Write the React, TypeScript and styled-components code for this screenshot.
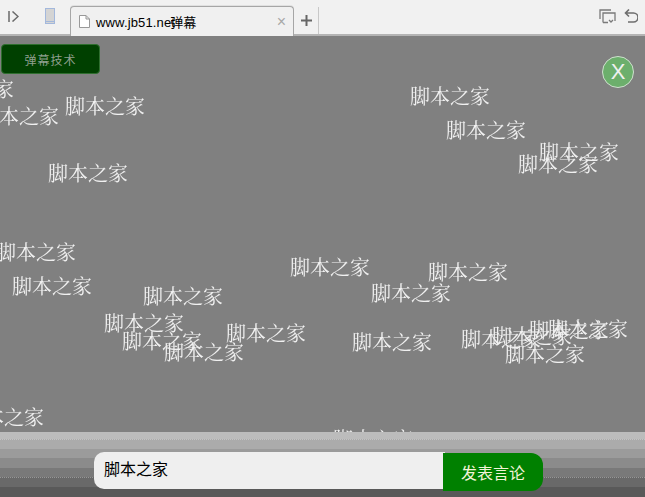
import React from 'react';
import styled, { createGlobalStyle } from 'styled-components';

const GlobalStyle = createGlobalStyle`
  html, body {
    margin: 0;
    padding: 0;
    overflow: hidden;
    background: #808080;
  }
`;

const Page = styled.div`
  width: 645px;
  height: 497px;
  display: flex;
  flex-direction: column;
  overflow: hidden;
  font-family: "Liberation Serif", "Noto Serif CJK SC", "Noto Sans CJK SC", serif;
`;

const BrowserBar = styled.div`
  height: 36px;
  flex: none;
  box-sizing: border-box;
  display: flex;
  align-items: flex-end;
  background: #f1f1f1;
  border-bottom: 2px solid #b4b4b4;
`;

const NavSlot = styled.div<{ $w: number; $left?: number }>`
  width: ${p => p.$w}px;
  height: 34px;
  flex: none;
  display: flex;
  align-items: center;
  justify-content: center;
  padding-bottom: 2px;
  padding-left: ${p => p.$left ?? 0}px;
  box-sizing: border-box;
`;

const Tab = styled.div`
  width: 224px;
  height: 30px;
  margin-bottom: -2px;
  flex: none;
  box-sizing: border-box;
  display: flex;
  align-items: center;
  padding: 0 7px 0 8px;
  background: #f0f0f0;
  border: 1px solid #a6a6a6;
  border-bottom: none;
  border-radius: 4px 4px 0 0;
  box-shadow: 0 -1px 0 #e0e0e0;
`;

const TabTitle = styled.span`
  margin-left: 6px;
  flex: 1;
  font-family: "Liberation Sans", "Noto Sans CJK SC", sans-serif;
  font-size: 13px;
  letter-spacing: 0.15px;
  color: #000;
  white-space: nowrap;
`;

const TitleOverlap = styled.span`
  margin-left: -5px;
`;

const TabClose = styled.span`
  font-family: "Liberation Sans", sans-serif;
  font-size: 16px;
  line-height: 1;
  color: #a8a8a8;
`;

const NewTab = styled.div`
  width: 24px;
  height: 27px;
  flex: none;
  display: flex;
  align-items: center;
  justify-content: center;
  border-right: 1px solid #c8c8c8;
`;

const Spacer = styled.div`
  flex: 1;
`;

const Stage = styled.div`
  flex: 1;
  position: relative;
  overflow: hidden;
  background: #808080;
`;

const TechButton = styled.button`
  position: absolute;
  left: 1px;
  top: 8px;
  width: 99px;
  height: 30px;
  padding: 0;
  background: #004000;
  border: 1px solid #2f6f2f;
  border-radius: 4px;
  color: #8f9f8f;
  font-family: "Noto Sans CJK SC", sans-serif;
  font-size: 12px;
  letter-spacing: 1px;
`;

const CloseBall = styled.div`
  position: absolute;
  right: 11px;
  top: 20px;
  width: 32px;
  height: 32px;
  box-sizing: border-box;
  border: 1px solid #cfe0cf;
  border-radius: 50%;
  background: #6caf6c;
  color: #f0f0f0;
  font-family: "Liberation Sans", sans-serif;
  font-size: 22px;
  line-height: 30px;
  text-align: center;
`;

const Danmaku = styled.span`
  position: absolute;
  font-size: 20px;
  line-height: 22px;
  color: #f0f0f0;
  white-space: nowrap;
  will-change: transform;
`;

const BottomBar = styled.div`
  height: 65px;
  flex: none;
  position: relative;
  display: flex;
  flex-direction: column;
`;

const Band = styled.div<{ $h: number; $c: string; $dotted?: boolean }>`
  height: ${p => p.$h}px;
  background: ${p => p.$c};
  border-top: ${p => (p.$dotted ? '1px dotted rgba(255,255,255,0.3)' : 'none')};
  box-sizing: border-box;
`;

const SendForm = styled.div`
  position: absolute;
  left: 94px;
  top: 20px;
  display: flex;
  align-items: flex-start;
`;

const SendInput = styled.div`
  width: 351px;
  height: 37px;
  box-sizing: border-box;
  padding-left: 10px;
  background: #efefef;
  border-radius: 10px 0 0 10px;
  font-family: "Liberation Serif", "Noto Sans CJK SC", serif;
  font-size: 16px;
  line-height: 36px;
  color: #000;
`;

const SendButton = styled.button`
  width: 100px;
  height: 38px;
  margin-top: 1px;
  margin-left: -2px;
  padding: 0;
  background: #008000;
  border: none;
  border-radius: 0 12px 12px 0;
  color: #f4f4d8;
  font-family: "Noto Sans CJK SC", sans-serif;
  font-size: 16px;
`;

const comments: [number, number][] = [
  [-66, 43], [-21, 70], [65, 60], [410, 50], [446, 84], [539, 106], [518, 118],
  [48, 127], [-4, 206], [12, 240], [290, 221], [428, 226], [371, 247], [143, 250],
  [104, 277], [226, 287], [122, 295], [164, 306], [352, 296], [461, 293], [492, 290],
  [529, 284], [548, 283], [505, 308], [-36, 371], [333, 393],
];

const bands: [number, string, boolean?][] = [
  [7, '#bcbcbc'],
  [10, '#ababab', true],
  [9, '#9b9b9b'],
  [10, '#8b8b8b'],
  [9, '#797979'],
  [10, '#696969', true],
  [10, '#595959'],
];

const App: React.FC = () => (
  <Page>
    <GlobalStyle />
    <BrowserBar>
      <NavSlot $w={27}>
        <svg width="11" height="11" viewBox="0 0 11 11" fill="none" stroke="#6a6a6a" strokeWidth="1.5">
          <path d="M1 0v11M4.5 .5L10 5.5 4.5 10.5" />
        </svg>
      </NavSlot>
      <NavSlot $w={43} $left={3}>
        <svg width="10" height="16" viewBox="0 0 10 16">
          <rect x="0.5" y="0.5" width="9" height="15" fill="#d4d4d4" stroke="#a3b8dc" />
          <path d="M1 13.5h8" stroke="#a3b8dc" />
        </svg>
      </NavSlot>
      <Tab>
        <svg width="11" height="13" viewBox="0 0 11 13" fill="#fff" stroke="#999">
          <path d="M.5 .5h6.5l3.5 3.5v8.5H.5zM7 .5V4h3.5" />
        </svg>
        <TabTitle>www.jb51.net<TitleOverlap>弹幕</TitleOverlap></TabTitle>
        <TabClose>×</TabClose>
      </Tab>
      <NewTab>
        <svg width="11" height="11" viewBox="0 0 11 11" stroke="#666" strokeWidth="2">
          <path d="M5.5 0v11M0 5.5h11" />
        </svg>
      </NewTab>
      <Spacer />
      <NavSlot $w={20}>
        <svg width="17" height="15" viewBox="0 0 17 15" fill="none" stroke="#7a7a7a" strokeWidth="1.3">
          <path d="M1 10V1h11M4 13.5V4h12v8M9 13.5H4M10 11l2 2 2-2" />
        </svg>
      </NavSlot>
      <NavSlot $w={28}>
        <svg width="14" height="14" viewBox="0 0 14 14" fill="none" stroke="#6e6e6e" strokeWidth="1.6">
          <path d="M5 .5L1.5 4 5 7.5M2 4h7.5a4 4 0 0 1 0 9H4" />
        </svg>
      </NavSlot>
    </BrowserBar>
    <Stage>
      <TechButton>弹幕技术</TechButton>
      <CloseBall>X</CloseBall>
      {comments.map(([x, y], i) => (
        <Danmaku key={i} style={{ left: x, top: y }}>脚本之家</Danmaku>
      ))}
    </Stage>
    <BottomBar>
      {bands.map(([h, c, dotted], i) => (
        <Band key={i} $h={h} $c={c} $dotted={dotted} />
      ))}
      <SendForm>
        <SendInput>脚本之家</SendInput>
        <SendButton>发表言论</SendButton>
      </SendForm>
    </BottomBar>
  </Page>
);

export default App;
